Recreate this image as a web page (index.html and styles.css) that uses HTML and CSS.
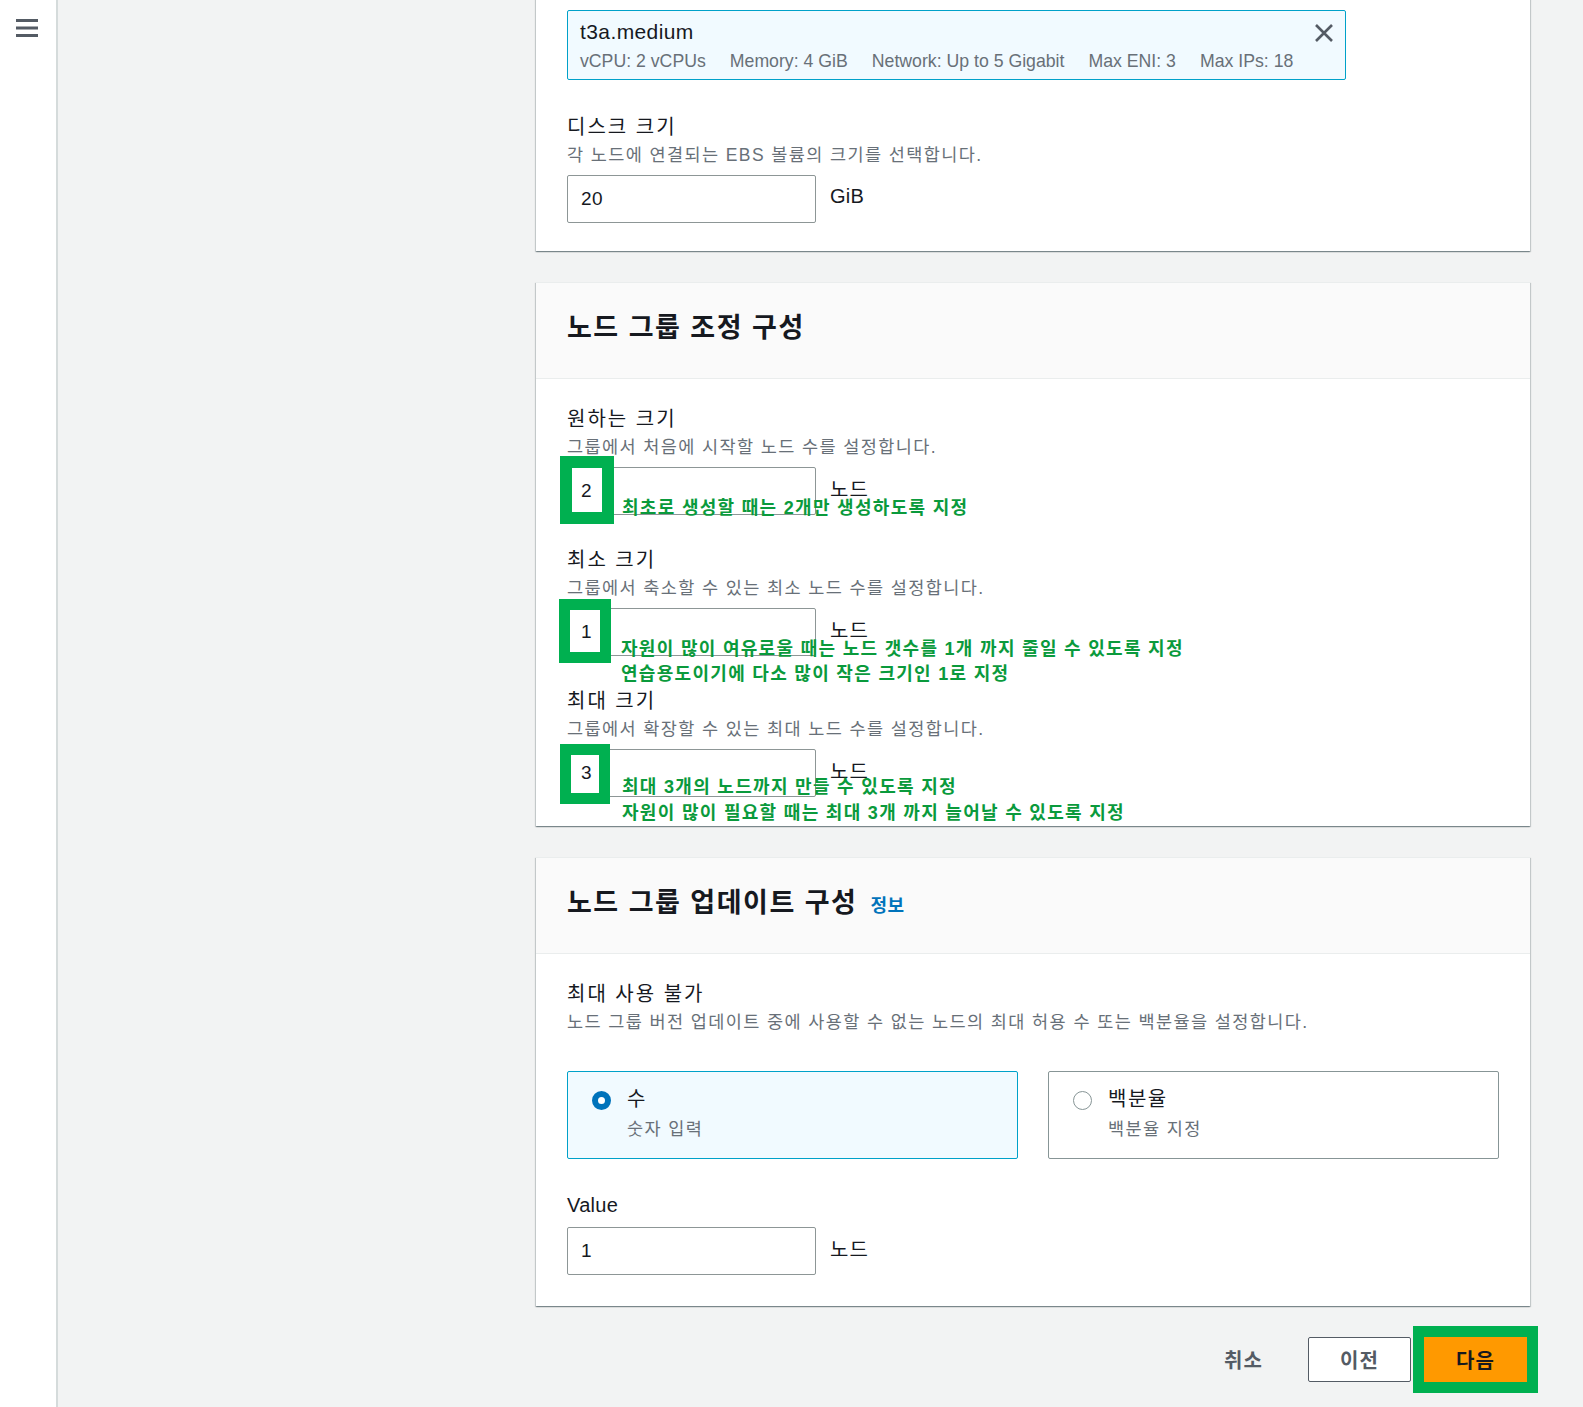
FILE: index.html
```html
<!DOCTYPE html>
<html lang="ko">
<head>
<meta charset="utf-8">
<title>노드 그룹 구성</title>
<link rel="stylesheet" href="styles.css">
</head>
<body>
<div class="app">
  <nav class="sidenav">
    <svg class="menu-icon" width="22" height="18" viewBox="0 0 22 18"><rect x="0" y="0" width="22" height="3" fill="#545b64"/><rect x="0" y="7.5" width="22" height="3" fill="#545b64"/><rect x="0" y="15" width="22" height="3" fill="#545b64"/></svg>
  </nav>
  <main class="main">
    <section class="card card-first">
      <div class="card-body">
        <div class="instance">
          <div class="instance-info">
            <div class="instance-name">t3a.medium</div>
            <div class="instance-specs">
              <span>vCPU: 2 vCPUs</span>
              <span>Memory: 4 GiB</span>
              <span>Network: Up to 5 Gigabit</span>
              <span>Max ENI: 3</span>
              <span>Max IPs: 18</span>
            </div>
          </div>
          <svg class="close-icon" width="20" height="20" viewBox="0 0 20 20"><path d="M2 2 L18 18 M18 2 L2 18" stroke="#545b64" stroke-width="2.6" stroke-linecap="butt"/></svg>
        </div>
        <div class="field">
          <div class="label">디스크 크기</div>
          <div class="desc">각 노드에 연결되는 EBS 볼륨의 크기를 선택합니다.</div>
          <div class="row">
            <div class="input">20</div>
            <span class="unit unit-latin">GiB</span>
          </div>
        </div>
      </div>
    </section>

    <section class="card">
      <header class="card-header"><h2>노드 그룹 조정 구성</h2></header>
      <div class="card-body">
        <div class="field">
          <div class="label">원하는 크기</div>
          <div class="desc">그룹에서 처음에 시작할 노드 수를 설정합니다.</div>
          <div class="row">
            <div class="input">2</div>
            <span class="unit">노드</span>
            <div class="mark mark-a"></div>
            <div class="note note-a">최초로 생성할 때는 2개만 생성하도록 지정</div>
          </div>
        </div>
        <div class="field">
          <div class="label">최소 크기</div>
          <div class="desc">그룹에서 축소할 수 있는 최소 노드 수를 설정합니다.</div>
          <div class="row">
            <div class="input">1</div>
            <span class="unit">노드</span>
            <div class="mark mark-b"></div>
            <div class="note note-b">자원이 많이 여유로울 때는 노드 갯수를 1개 까지 줄일 수 있도록 지정<br>연습용도이기에 다소 많이 작은 크기인 1로 지정</div>
          </div>
        </div>
        <div class="field">
          <div class="label">최대 크기</div>
          <div class="desc">그룹에서 확장할 수 있는 최대 노드 수를 설정합니다.</div>
          <div class="row">
            <div class="input">3</div>
            <span class="unit">노드</span>
            <div class="mark mark-c"></div>
            <div class="note note-c">최대 3개의 노드까지 만들 수 있도록 지정<br>자원이 많이 필요할 때는 최대 3개 까지 늘어날 수 있도록 지정</div>
          </div>
        </div>
      </div>
    </section>

    <section class="card">
      <header class="card-header"><h2>노드 그룹 업데이트 구성 <a class="info">정보</a></h2></header>
      <div class="card-body card-body-last">
        <div class="field">
          <div class="label">최대 사용 불가</div>
          <div class="desc">노드 그룹 버전 업데이트 중에 사용할 수 없는 노드의 최대 허용 수 또는 백분율을 설정합니다.</div>
          <div class="tiles">
            <div class="tile tile-selected">
              <span class="radio radio-on"></span>
              <div>
                <div class="tile-label">수</div>
                <div class="tile-desc">숫자 입력</div>
              </div>
            </div>
            <div class="tile">
              <span class="radio"></span>
              <div>
                <div class="tile-label">백분율</div>
                <div class="tile-desc">백분율 지정</div>
              </div>
            </div>
          </div>
        </div>
        <div class="field field-value">
          <div class="label label-latin">Value</div>
          <div class="row row-plain">
            <div class="input">1</div>
            <span class="unit">노드</span>
          </div>
        </div>
      </div>
    </section>

    <div class="actions">
      <button class="btn btn-link">취소</button>
      <button class="btn btn-normal">이전</button>
      <button class="btn btn-primary">다음</button>
    </div>
  </main>
</div>
</body>
</html>
```
FILE: styles.css
```css
* { box-sizing: border-box; }
html, body { margin: 0; padding: 0; }
body {
  font-family: "Liberation Sans", "Noto Sans CJK KR", sans-serif;
  color: #16191f;
  background: #f2f3f3;
  overflow: hidden;
}
.app {
  display: flex;
  min-height: 1407px;
}
.sidenav {
  width: 58px;
  flex: 0 0 58px;
  background: #fff;
  border-right: 2px solid #d5dbdb;
  padding: 19px 0 0 16px;
}
.menu-icon { display: block; }
.main {
  flex: 1;
  padding: 0 53px 0 478px;
}
.card {
  background: #fff;
  border-top: 1px solid #eaeded;
  box-shadow: 0 1px 1px 0 rgba(0,28,36,.3), 1px 1px 1px 0 rgba(0,28,36,.15), -1px 1px 1px 0 rgba(0,28,36,.15);
  margin-bottom: 31px;
}
.card + .card { margin-top: 2px; }
.card-first {
  margin-top: -20px;
  border-top: none;
}
.card-first .card-body { padding-top: 30px; padding-bottom: 28px; }
.card-header {
  background: #fafafa;
  border-bottom: 1px solid #eaeded;
  padding: 30px 31px 35px;
}
.card-header h2 {
  margin: 0;
  font-size: 27px;
  line-height: 30px;
  height: 30px;
  font-weight: 700;
  letter-spacing: 1.5px;
  display: flex;
  align-items: baseline;
}
.info {
  font-size: 18px;
  line-height: 30px;
  color: #0073bb;
  font-weight: 700;
  letter-spacing: 0.5px;
  margin-left: 13px;
}
.card-body {
  padding: 27px 31px 29px;
}
.card-body-last { padding-bottom: 31px; }
.instance {
  max-width: 779px;
  border: 1px solid #00a1c9;
  border-radius: 2px;
  background: #f1faff;
  padding: 8px 11px 6px 12px;
  display: flex;
  justify-content: space-between;
  align-items: flex-start;
  height: 70px;
  margin-bottom: 34px;
}
.instance-name {
  font-size: 21px;
  line-height: 26px;
  letter-spacing: 0.4px;
}
.instance-specs {
  display: flex;
  gap: 24px;
  font-size: 17.7px;
  line-height: 24px;
  color: #687078;
  margin-top: 4px;
}
.close-icon { margin-top: 4px; }
.field + .field { margin-top: 32px; }
.field + .field-value { margin-top: 33px; }
.label {
  font-size: 20px;
  line-height: 26px;
  letter-spacing: 2px;
}
.label-latin { letter-spacing: 0.3px; }
.desc {
  font-size: 17.5px;
  line-height: 24px;
  color: #687078;
  margin-top: 3px;
  letter-spacing: 1.4px;
}
.row {
  position: relative;
  display: flex;
  align-items: center;
  margin-top: 8px;
}
.row-plain { margin-top: 9px; }
.input {
  width: 249px;
  height: 48px;
  border: 1px solid #8d9696;
  border-radius: 2px;
  background: #fff;
  padding: 0 13px;
  display: flex;
  align-items: center;
  font-size: 19px;
  letter-spacing: 0.5px;
}
.unit {
  font-size: 20px;
  margin-left: 14px;
  margin-top: -5px;
  letter-spacing: 1px;
}
.unit-latin { letter-spacing: 0.3px; }
.mark {
  position: absolute;
  border: 12px solid #00b050;
  background: transparent;
}
.mark-a { left: -7px; top: -11px; width: 54px; height: 68px; }
.mark-b { left: -8px; top: -9px; width: 52px; height: 64px; border-width: 11px; }
.mark-c { left: -7px; top: -5px; width: 50px; height: 60px; border-width: 11px; }
.note {
  position: absolute;
  left: 55px;
  color: #0a9a3c;
  font-weight: 700;
  font-size: 18px;
  line-height: 25px;
  white-space: nowrap;
  letter-spacing: 1.3px;
}
.note-a { top: 29px; }
.note-b { top: 29px; left: 54px; }
.note-c { top: 25px; line-height: 26px; }
.tiles {
  display: flex;
  gap: 30px;
  margin-top: 37px;
}
.tile {
  flex: 1;
  height: 88px;
  border: 1px solid #879596;
  border-radius: 2px;
  padding: 14px 20px 19px 24px;
  display: flex;
  align-items: flex-start;
  gap: 16px;
  background: #fff;
}
.tile-selected {
  border-color: #00a1c9;
  background: #f1faff;
}
.radio {
  width: 19px;
  height: 19px;
  border-radius: 50%;
  border: 1.5px solid #879596;
  background: #fff;
  margin-top: 5px;
  flex: 0 0 19px;
}
.radio-on {
  border: 6px solid #0073bb;
}
.tile-label {
  font-size: 20px;
  line-height: 26px;
  letter-spacing: 1.5px;
}
.tile-desc {
  font-size: 17.5px;
  line-height: 24px;
  color: #687078;
  margin-top: 5px;
  letter-spacing: 1.4px;
}
.actions {
  display: flex;
  justify-content: flex-end;
  gap: 13px;
  padding-right: 3px;
  margin-top: 31px;
}
.btn {
  width: 103px;
  height: 45px;
  font-family: "Liberation Sans", "Noto Sans CJK KR", sans-serif;
  font-size: 20px;
  font-weight: 700;
  border-radius: 2px;
  padding: 0;
  letter-spacing: 1px;
  cursor: pointer;
}
.btn-link {
  background: transparent;
  border: 1px solid transparent;
  color: #545b64;
}
.btn-normal {
  background: #fff;
  border: 1px solid #545b64;
  color: #545b64;
}
.btn-primary {
  background: #ff9900;
  border: 1px solid #ff9900;
  border-radius: 0;
  color: #16191f;
  outline: 11px solid #00b050;
}
```
